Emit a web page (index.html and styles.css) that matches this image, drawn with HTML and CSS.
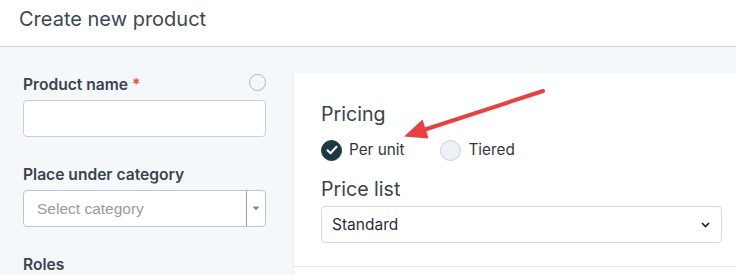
FILE: index.html
```html
<!DOCTYPE html>
<html>
<head>
<meta charset="utf-8">
<link rel="stylesheet" href="styles.css">
</head>
<body>
<header class="page-header">
  <h1 class="page-title">Create new product</h1>
</header>
<main class="layout">
  <aside class="side">
    <div class="field">
      <div class="label-row">
        <label class="label">Product name <span class="req">*</span></label>
        <span class="status-circle"></span>
      </div>
      <input class="text-input" type="text">
    </div>
    <div class="field">
      <div class="label-row">
        <label class="label">Place under category</label>
      </div>
      <div class="combo">
        <span class="combo-text">Select category</span>
        <span class="combo-btn"><svg width="8" height="5" viewBox="0 0 8 5"><path d="M0.5 0.5h7L4 4.5z" fill="#8a8a8a"/></svg></span>
      </div>
    </div>
    <div class="field">
      <div class="label-row">
        <label class="label">Roles</label>
      </div>
    </div>
  </aside>
  <section class="content">
    <div class="card-section">
      <h2 class="section-title">Pricing</h2>
      <div class="radio-row">
        <span class="radio checked"><svg width="12" height="10" viewBox="0 0 12 10"><path d="M1.5 5.2l3 3L10.5 1.8" fill="none" stroke="#fff" stroke-width="2" stroke-linecap="round" stroke-linejoin="round"/></svg></span>
        <span class="radio-label">Per unit</span>
        <span class="radio"></span>
        <span class="radio-label">Tiered</span>
      </div>
      <h2 class="section-title price-title">Price list</h2>
      <div class="select">
        <span>Standard</span>
        <svg width="9" height="6" viewBox="0 0 9 6"><path d="M1 1l3.5 3.5L8 1" fill="none" stroke="#1f2328" stroke-width="1.7"/></svg>
      </div>
    </div>
  </section>
</main>
<svg class="annotation" width="736" height="275" viewBox="0 0 736 275">
  <line x1="543" y1="91" x2="422" y2="130.5" stroke="#e8413f" stroke-width="4" stroke-linecap="round"/>
  <polygon points="404,136.5 428.5,138.5 422.5,119.5" fill="#e8413f"/>
</svg>
</body>
</html>
```
FILE: styles.css
```css
* { box-sizing: border-box; }
html, body { margin: 0; padding: 0; }
body {
  width: 736px;
  height: 275px;
  overflow: hidden;
  position: relative;
  font-family: Inter, "Noto Sans", sans-serif;
  color: #3a4250;
  background: #f5f8fb;
}
.page-header {
  height: 47px;
  background: #fff;
  border-bottom: 1px solid #c9d3e0;
  padding: 7px 19px 0;
}
.page-title {
  margin: 0;
  font-size: 20px;
  line-height: 24px;
  font-weight: 400;
  color: #3d4753;
}
.layout {
  display: flex;
  height: 228px;
}
.side {
  width: 293px;
  flex: none;
  padding: 28px 27px 0 23px;
}
.field { margin-bottom: 28px; }
.label-row {
  display: flex;
  justify-content: space-between;
  align-items: center;
  height: 20px;
  margin-bottom: 5px;
}
.label {
  font-size: 15.6px;
  line-height: 20px;
  font-weight: 600;
  color: #3a4250;
}
.req { color: #e0533d; }
.status-circle {
  width: 17px;
  height: 17px;
  border: 1.5px solid #a9b5c8;
  border-radius: 50%;
  margin-top: -5px;
}
.text-input {
  display: block;
  width: 243px;
  height: 37px;
  border: 1px solid #c5cedc;
  border-radius: 4px;
  background: #fff;
  margin: 0;
}
.combo {
  display: flex;
  width: 243px;
  height: 37px;
  border: 1px solid #b9c6da;
  border-radius: 4px;
  background: #fff;
}
.combo-text {
  flex: 1;
  padding-left: 13px;
  font-family: "Liberation Sans", Arial, sans-serif;
  font-size: 15.5px;
  line-height: 35px;
  color: #9a9a9a;
}
.combo-btn {
  width: 19px;
  border-left: 1px solid #9e9e9e;
  display: flex;
  align-items: center;
  justify-content: center;
}
.content {
  flex: 1;
  margin-top: 26px;
  background: #fff;
  border-left: 1px solid #eceff3;
}
.card-section {
  padding: 29px 14px 23px 27px;
  border-bottom: 1px solid #e3e6ea;
}
.section-title {
  margin: 0;
  font-size: 19.6px;
  line-height: 24px;
  font-weight: 400;
  color: #3a4350;
}
.radio-row {
  display: flex;
  align-items: center;
  height: 20px;
  margin-top: 14px;
}
.radio {
  width: 21px;
  height: 21px;
  border-radius: 50%;
  background: #edf0f5;
  border: 1px solid #c9d0db;
  display: flex;
  align-items: center;
  justify-content: center;
}
.radio.checked {
  background: #1d3745;
  border-color: #1d3745;
}
.radio-label {
  font-size: 15.3px;
  line-height: 20px;
  margin-left: 7px;
  margin-right: 36px;
  color: #2f3640;
}
.price-title { margin-top: 17px; }
.select {
  margin-top: 5px;
  height: 37px;
  border: 1px solid #d3d8df;
  border-radius: 4px;
  display: flex;
  align-items: center;
  justify-content: space-between;
  padding: 0 11px 0 10px;
  font-size: 15.5px;
  color: #2a2f36;
}
.annotation {
  position: absolute;
  left: 0;
  top: 0;
  pointer-events: none;
}
```
